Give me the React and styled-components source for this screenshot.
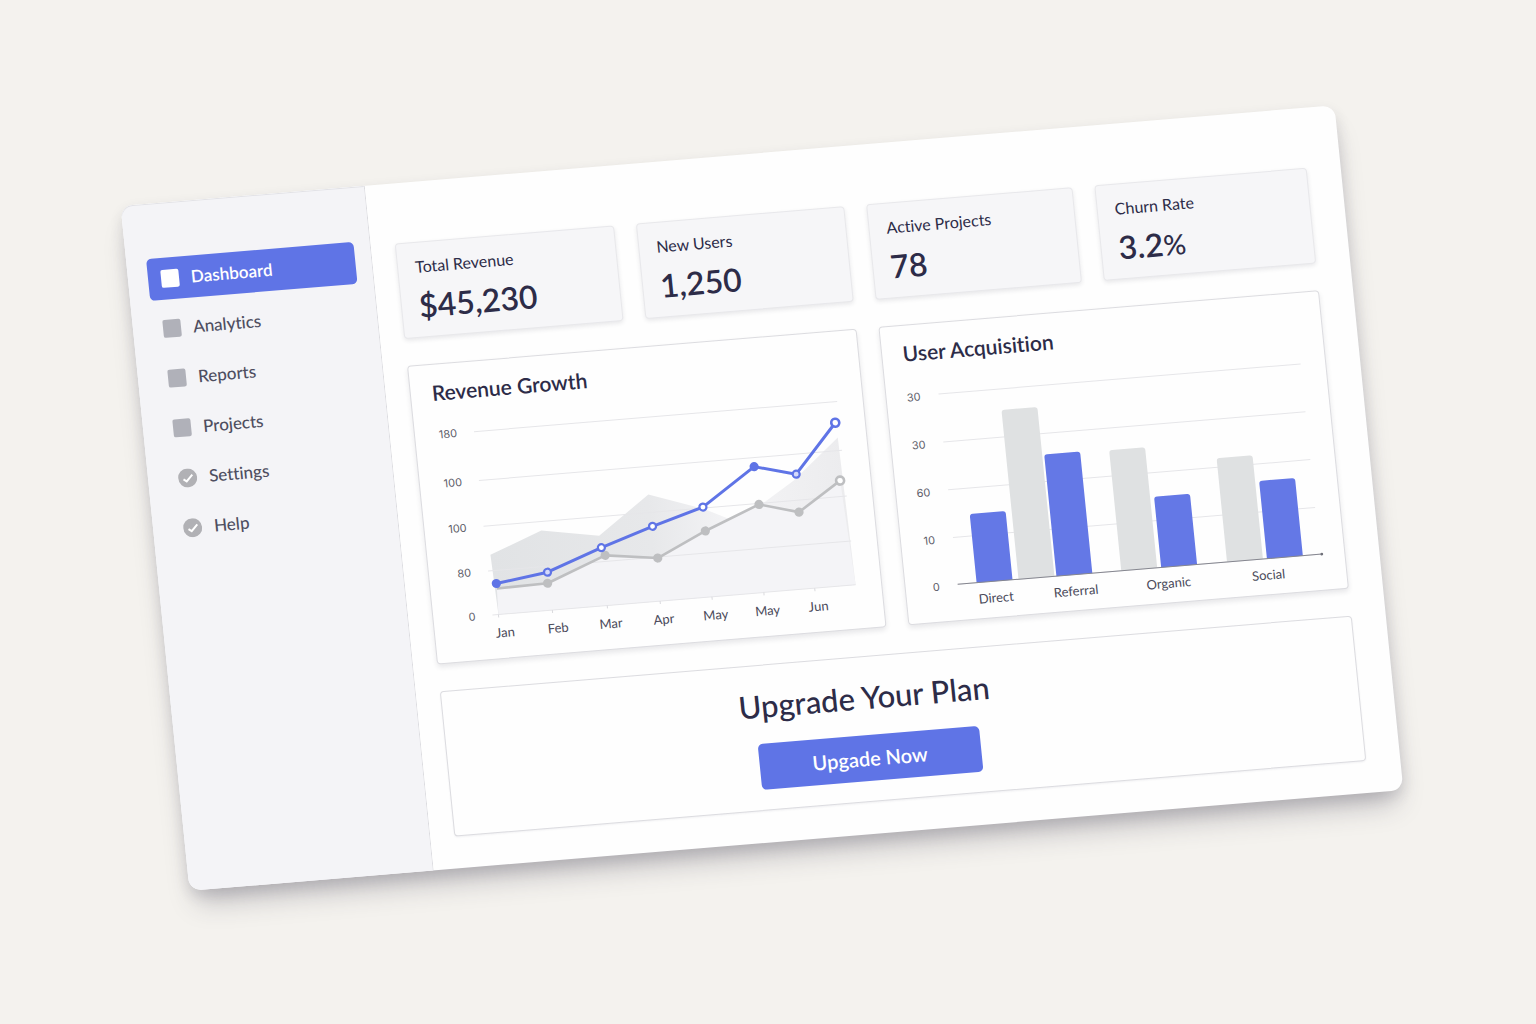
import React from "react";
import styled, { createGlobalStyle, css } from "styled-components";

const color = {
  page: "#f4f2ee",
  sidebar: "#f4f4f7",
  line: "#dcdce0",
  ink: "#2d2c48",
  nav: "#4e4e60",
  muted: "#b0b1b9",
  accent: "#5f74e6",
};

const sans = `Lato, "Liberation Sans", sans-serif`;
const axisSans = `Inter, "Liberation Sans", sans-serif`;

const GlobalStyle = createGlobalStyle`
  *, *::before, *::after { box-sizing: border-box; }
  body {
    margin: 0;
    background: ${color.page};
    color: ${color.ink};
    font-family: ${sans};
    font-variant-ligatures: none;
  }
  h2, p, dl, dd, ul { margin: 0; padding: 0; }
`;

const Page = styled.div`
  min-height: 100vh;
  display: flex;
  align-items: center;
  padding: 0 165px 28px 153px;
  overflow: hidden;
`;

const Board = styled.div`
  flex: 1;
  display: flex;
  border-radius: 12px;
  background: #fefefe;
  transform: rotate(-4.75deg) skewX(1deg);
  box-shadow:
    0 20px 28px -8px rgba(50, 48, 70, 0.28),
    0 6px 14px rgba(50, 48, 70, 0.14);
`;

const Sidebar = styled.nav`
  flex: none;
  width: 245px;
  padding: 55px 16px 0 20px;
  border-right: 1px solid ${color.line};
  border-radius: 12px 0 0 12px;
  background: ${color.sidebar};
  box-shadow: inset 0 1px 0 #e2e2e6;
`;

const NavList = styled.ul`
  list-style: none;
  display: grid;
  gap: 8px;
`;

const NavLink = styled.a`
  display: flex;
  align-items: center;
  gap: 12px;
  height: 42px;
  padding: 0 10px;
  border-radius: 5px;
  color: ${color.nav};
  font-size: 17px;
  line-height: 24px;
  font-weight: 500;
  text-decoration: none;
  ${(p) =>
    p.$active &&
    css`
      padding: 0 13px;
      background: ${color.accent};
      color: #fff;
      font-weight: 600;
    `}
`;

const NavSquare = styled.span`
  width: 18px;
  height: 18px;
  border-radius: 2px;
  background: ${(p) => (p.$active ? "#fff" : color.muted)};
`;

const Main = styled.main`
  flex: 1;
  min-width: 0;
  padding: 60px 34px 32px 24px;
  display: flex;
  flex-direction: column;
  gap: 27px;
`;

const Stats = styled.dl`
  display: grid;
  grid-template-columns: 220fr 209fr 207fr 213fr;
  gap: 22px;
`;

const StatCard = styled.div`
  padding: 14px 17px 10px;
  border: 1px solid #e8e8eb;
  border-radius: 4px;
  background: #f6f6f8;
  box-shadow: 0 2px 4px rgba(40, 40, 60, 0.1);
`;

const StatLabel = styled.dt`
  font-size: 16px;
  line-height: 20px;
`;

const StatValue = styled.dd`
  padding-top: 9px;
  font-size: 32px;
  line-height: 40px;
  font-weight: 600;
`;

const Unit = styled.span`
  font-size: 28px;
  font-weight: 500;
`;

const Charts = styled.div`
  display: grid;
  grid-template-columns: 450fr 442fr;
  gap: 22px;
`;

const Panel = styled.section`
  border: 1px solid ${color.line};
  border-radius: 4px;
  background: #fefefe;
`;

const ChartPanel = styled(Panel)`
  padding-top: 16px;
  box-shadow: 0 3px 5px rgba(40, 40, 60, 0.1);
`;

const ChartTitle = styled.h2`
  padding: 0 21px;
  font-size: 21px;
  line-height: 24px;
  font-weight: 600;
`;

const Plot = styled.svg`
  display: block;
  width: 100%;
  height: auto;
  overflow: visible;
`;

const GridLine = styled.line`
  stroke: #e6e6e9;
  stroke-width: 1;
`;

const ValueLabel = styled.text`
  fill: #5c5c68;
  font-family: ${axisSans};
  font-size: 11px;
  text-anchor: end;
`;

const CategoryLabel = styled.text`
  fill: #4a4a5a;
  font-family: ${sans};
  font-size: 13px;
  text-anchor: middle;
`;

const Upgrade = styled(Panel)`
  display: flex;
  flex-direction: column;
  align-items: center;
  gap: 20px;
  padding: 22px 72px 20px 0;
  box-shadow: 0 1px 2px rgba(40, 40, 60, 0.06);
`;

const UpgradeTitle = styled.h2`
  font-size: 31px;
  line-height: 36px;
  font-weight: 500;
`;

const UpgradeButton = styled.button`
  width: 222px;
  height: 46px;
  border: 0;
  border-radius: 5px;
  background: ${color.accent};
  color: #fff;
  font-family: ${sans};
  font-size: 20px;
  line-height: 24px;
  font-weight: 600;
  cursor: pointer;
`;

function CheckIcon() {
  return (
    <svg width="19" height="19" viewBox="0 0 19 19" aria-hidden="true">
      <circle cx="9.5" cy="9.5" r="9.5" fill="#b1b1b5" />
      <path d="M5.2 10.6l3 2.2 6.2-6.2" fill="none" stroke="#fff" strokeWidth="2" />
    </svg>
  );
}

const navItems = [
  { name: "Dashboard", active: true },
  { name: "Analytics" },
  { name: "Reports" },
  { name: "Projects" },
  { name: "Settings", check: true },
  { name: "Help", check: true },
];

const stats = [
  { label: "Total Revenue", value: "$45,230" },
  { label: "New Users", value: "1,250" },
  { label: "Active Projects", value: "78" },
  { label: "Churn Rate", value: "3.2", unit: "%" },
];

const growthLevels = [
  [30, "180"],
  [79, "100"],
  [125, "100"],
  [170, "80"],
  [214, "0"],
];

const months = [
  [65, 70, "Jan"],
  [119, 123, "Feb"],
  [174, 176, "Mar"],
  [227, 229, "Apr"],
  [279, 281, "May"],
  [331, 333, "May"],
  [382, 384, "Jun"],
];

const revenue = [
  [66, 183, "solid"],
  [118, 176, "tinted"],
  [174, 156, "open"],
  [227, 139, "open"],
  [279, 124, "open"],
  [334, 88, "solid"],
  [375, 99, "tinted"],
  [419, 51, "open"],
];

const previous = [
  [66, 188, "none"],
  [117, 187, "solid"],
  [177, 164, "solid"],
  [229, 171, "solid"],
  [279, 148, "solid"],
  [335, 126, "solid"],
  [374, 137, "solid"],
  [418, 109, "open"],
];

const toPoints = (series) => series.map(([x, y]) => `${x},${y}`).join(" ");

function Series({ data, stroke, width }) {
  const fills = { solid: stroke, tinted: "#d5dafa", open: "#fff" };
  return (
    <g stroke={stroke}>
      <polyline points={toPoints(data)} fill="none" strokeWidth={width} strokeLinejoin="round" />
      {data
        .filter(([, , kind]) => kind !== "none")
        .map(([x, y, kind]) => (
          <circle
            key={x}
            cx={x}
            cy={y}
            r={x > 400 ? 4 : 3.5}
            fill={fills[kind]}
            strokeWidth={x > 400 ? 2.6 : 2.2}
          />
        ))}
    </g>
  );
}

function GrowthChart() {
  return (
    <Plot viewBox="0 0 448 258" role="img" aria-label="Revenue Growth">
      <defs>
        <linearGradient id="band" x1="0" x2="1" y1="0" y2="0">
          <stop offset="0" stopColor="#e1e3e5" />
          <stop offset="0.45" stopColor="#e7e8ea" />
          <stop offset="0.68" stopColor="#f4f4f6" />
          <stop offset="1" stopColor="#ececee" />
        </linearGradient>
      </defs>
      <polygon
        points="63,154 116,134 173,144 226,107 280,126 304,138 341,124 372,105 420,66 423,214 65,214"
        fill="url(#band)"
      />
      <polygon points={`${toPoints(previous)} 423,214 65,214`} fill="#f4f4f7" />
      {growthLevels.map(([y, label]) => (
        <g key={y}>
          <GridLine x1="59" x2="423" y1={y} y2={y} />
          <ValueLabel x="42" y={y + 4}>{label}</ValueLabel>
        </g>
      ))}
      {months.map(([tick, x, label]) => (
        <g key={x}>
          <line x1={tick} x2={tick} y1="214" y2="217" stroke="#dadade" />
          <CategoryLabel x={x} y="237">{label}</CategoryLabel>
        </g>
      ))}
      <Series data={previous} stroke="#bebfc1" width="2.6" />
      <Series data={revenue} stroke={color.accent} width="3" />
    </Plot>
  );
}

const acquisitionLevels = [
  [31, "30"],
  [79, "30"],
  [127, "60"],
  [175, "10"],
  [222, "0"],
];

const bars = [
  [71, 153, true],
  [113, 52],
  [151, 100, true],
  [216, 101],
  [256, 151, true],
  [322, 118],
  [362, 144, true],
];

const sources = [
  [89, "Direct"],
  [169, "Referral"],
  [262, "Organic"],
  [362, "Social"],
];

function AcquisitionChart() {
  return (
    <Plot viewBox="0 0 440 258" role="img" aria-label="User Acquisition">
      {acquisitionLevels.map(([y, label]) => (
        <g key={y}>
          <GridLine x1="52" x2="415" y1={y} y2={y} />
          <ValueLabel x="34" y={y + 5}>{label}</ValueLabel>
        </g>
      ))}
      {bars.map(([x, y, accent]) => (
        <path
          key={x}
          d={`M${x} 222V${y + 3}q0-3 3-3h30q3 0 3 3V222z`}
          fill={accent ? "#6478e6" : "#dfe1e2"}
        />
      ))}
      <line x1="52" x2="417" y1="222" y2="222" stroke="#85868f" />
      <circle cx="417" cy="222" r="1.4" fill="#6f7079" />
      {sources.map(([x, label]) => (
        <CategoryLabel key={x} x={x} y="243">{label}</CategoryLabel>
      ))}
    </Plot>
  );
}

export default function App() {
  return (
    <Page>
      <GlobalStyle />
      <Board>
        <Sidebar aria-label="Main">
          <NavList>
            {navItems.map(({ name, active, check }) => (
              <li key={name}>
                <NavLink href={`#${name.toLowerCase()}`} $active={active}>
                  {check ? <CheckIcon /> : <NavSquare $active={active} />}
                  {name}
                </NavLink>
              </li>
            ))}
          </NavList>
        </Sidebar>
        <Main>
          <Stats>
            {stats.map(({ label, value, unit }) => (
              <StatCard key={label}>
                <StatLabel>{label}</StatLabel>
                <StatValue>
                  {value}
                  {unit && <Unit>{unit}</Unit>}
                </StatValue>
              </StatCard>
            ))}
          </Stats>
          <Charts>
            <ChartPanel>
              <ChartTitle>Revenue Growth</ChartTitle>
              <GrowthChart />
            </ChartPanel>
            <ChartPanel>
              <ChartTitle>User Acquisition</ChartTitle>
              <AcquisitionChart />
            </ChartPanel>
          </Charts>
          <Upgrade>
            <UpgradeTitle>Upgrade Your Plan</UpgradeTitle>
            <UpgradeButton type="button">Upgade Now</UpgradeButton>
          </Upgrade>
        </Main>
      </Board>
    </Page>
  );
}
